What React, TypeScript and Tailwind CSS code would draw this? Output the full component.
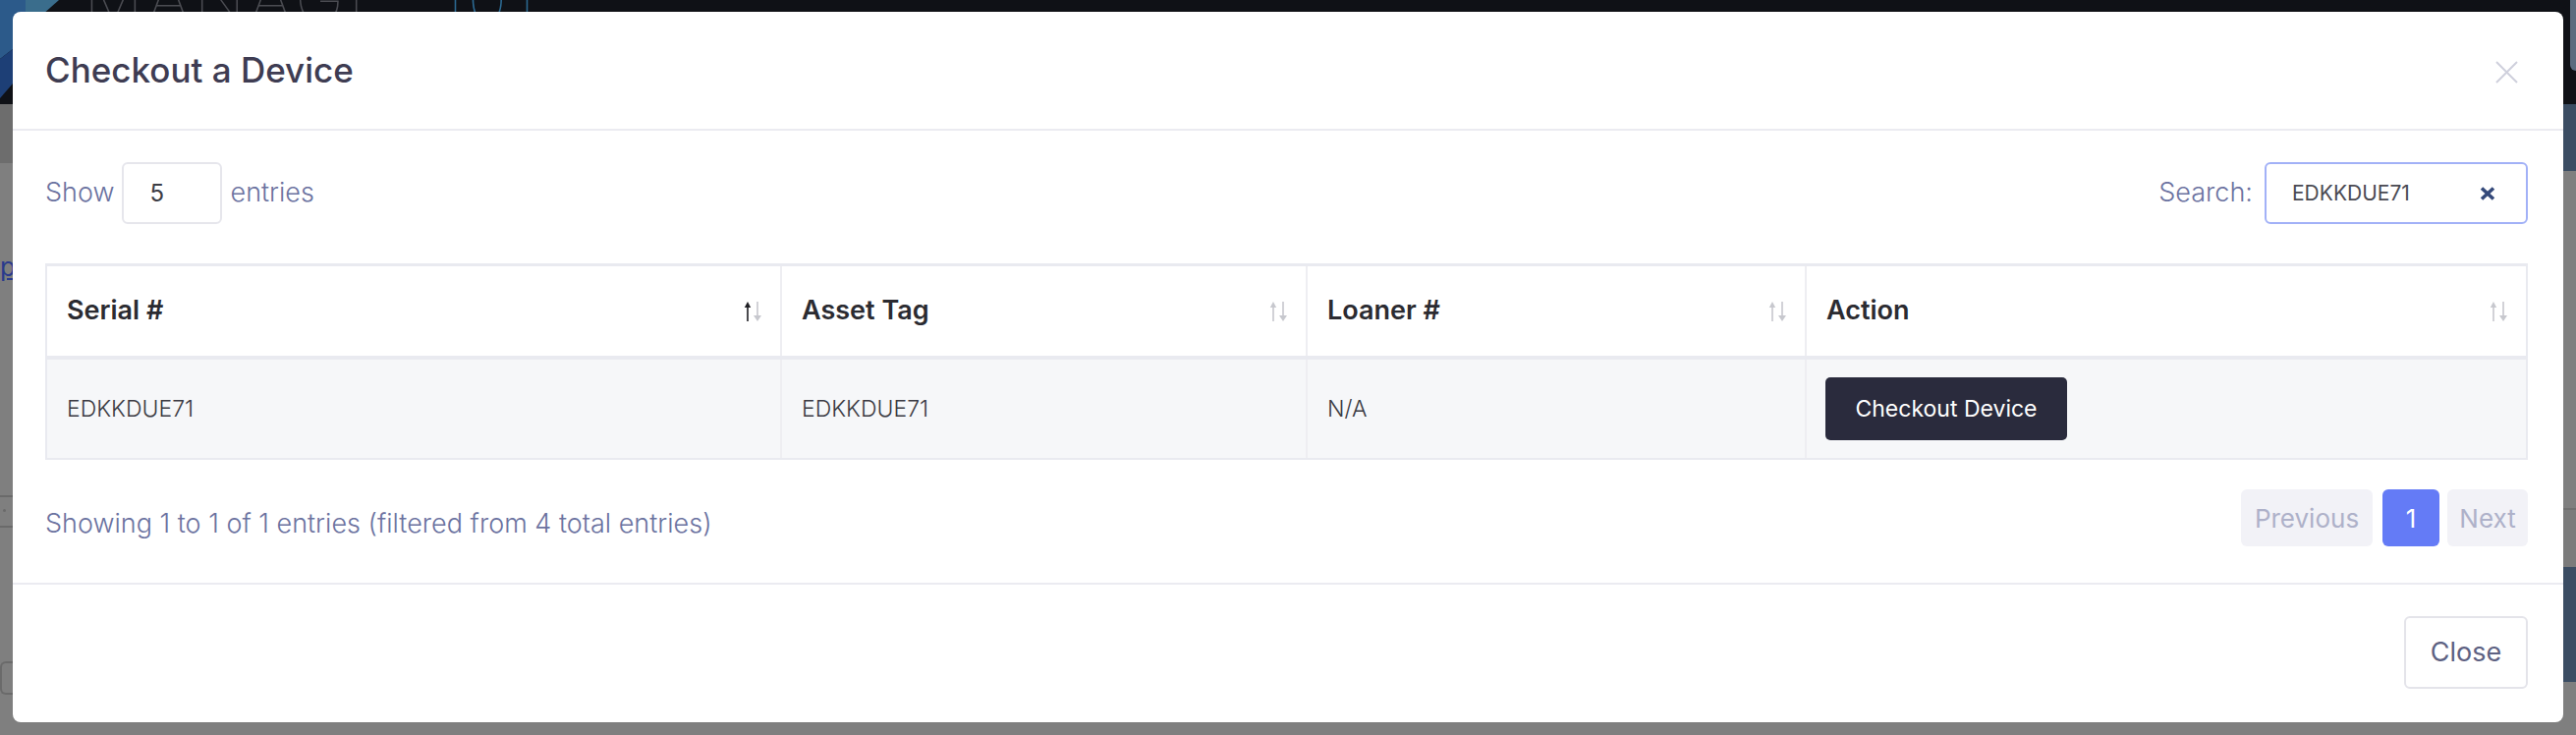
import React from "react";

function SortIcon({ active }: { active?: boolean }) {
  return (
    <svg width="24" height="24" viewBox="0 0 24 24" className="shrink-0">
      <g fill={active ? "#1f1f24" : "#c7c8ce"}>
        <rect x="6.2" y="5" width="1.6" height="17" />
        <path d="M3.8 8 L7 2 L10.2 8 Z" />
      </g>
      <g fill="#c7c8ce">
        <rect x="16.2" y="2" width="1.6" height="17" />
        <path d="M13 16 L17 22 L21 16 Z" />
      </g>
    </svg>
  );
}

const columns = [
  { label: "Serial #", active: true },
  { label: "Asset Tag" },
  { label: "Loaner #" },
  { label: "Action" },
];

export default function App() {
  return (
    <div className="relative h-[748px] w-[2622px] overflow-hidden bg-[#7f7f7f] font-[family-name:Inter,sans-serif]">
      {/* page behind the backdrop */}
      <div className="flex h-[106px] items-start overflow-hidden bg-[#0f1116]">
        <svg width="60" height="106" viewBox="0 0 60 106" className="shrink-0">
          <polygon points="0,0 26,0 26,40 0,60" fill="#2c5a8a" />
          <polygon points="26,0 60,0 26,30" fill="#3a6d8c" />
          <polygon points="0,60 26,40 26,70 0,100" fill="#1d3f76" />
        </svg>
        <div className="-mt-[36px] ml-[25px] flex items-baseline text-[68px] font-thin leading-none tracking-[4px]">
          <span className="text-[#4b4c52]">MANAGE</span>
          <span className="ml-[49px] text-[#2c6a93]">101</span>
        </div>
        <div className="ml-auto h-[72px] w-[6px] rounded-bl-[8px] bg-[#5b6b7f]" />
      </div>
      <div className="flex h-[642px]">
        <div className="flex w-[13px] flex-col">
          <div className="h-[60px] bg-[#6d6d6d]" />
          <div className="mt-[93px] h-[29px] overflow-hidden text-[26px] leading-none text-[#2a3a8c] underline">
            pc
          </div>
          <div className="mt-[216px] h-[2px] bg-[#6a6a6a]" />
          <div className="mt-[12px] ml-[3px] h-[3px] w-[3px] rounded-full bg-[#6a6a6a]" />
          <div className="mt-[14px] h-[2px] bg-[#6a6a6a]" />
          <div className="mt-[136px] h-[34px] rounded-l-[6px] border-2 border-r-0 border-[#6a6a6a]" />
        </div>
        <div className="flex-1" />
        <div className="flex w-[13px] flex-col">
          <div className="h-[68px] bg-[#3b4d63]" />
          <div className="h-[343px]" />
          <div className="h-[2px] bg-[#707070]" />
          <div className="h-[58px] bg-[#7b7b7b]" />
          <div className="h-[117px] bg-[#3b4d63]" />
        </div>
      </div>

      {/* modal */}
      <div className="absolute left-[13px] top-[12px] flex h-[723px] w-[2596px] flex-col rounded-[8px] bg-white">
        <div className="flex h-[121px] items-center justify-between border-b-2 border-[#ebebf1] pl-[33px] pr-[46px]">
          <h2 className="text-[35px] font-medium leading-none text-[#3e3c52]">Checkout a Device</h2>
          <svg width="23" height="23" viewBox="0 0 23 23" className="mt-[3px]">
            <path d="M1 1 L22 22 M22 1 L1 22" stroke="#cfd0dc" strokeWidth="2" />
          </svg>
        </div>

        <div className="flex h-[460px] flex-col pl-[33px] pr-[36px] pt-[32px]">
          <div className="flex h-[63px] items-center justify-between">
            <div className="flex items-center gap-[8px] text-[27px] font-light text-[#6b72a0]">
              <span>Show</span>
              <div className="flex h-[63px] w-[102px] items-center rounded-[6px] border-2 border-[#e6e6ec] pl-[26px] text-[24px] font-normal text-[#3d3d45]">
                5
              </div>
              <span>entries</span>
            </div>
            <div className="flex items-center gap-[12px] text-[27px] font-light text-[#6b72a0]">
              <span>Search:</span>
              <div className="flex h-[63px] w-[268px] items-center justify-between rounded-[6px] border-2 border-[#a2b1f7] pl-[26px] pr-[31px] text-[21px] font-normal text-[#4a4a52]">
                <span>EDKKDUE71</span>
                <svg width="16" height="14" viewBox="0 0 16 14">
                  <path d="M2 1.5 L14 12.5 M14 1.5 L2 12.5" stroke="#34497a" strokeWidth="3.6" />
                </svg>
              </div>
            </div>
          </div>

          <div className="mt-[40px] border-x-2 border-b-2 border-t-[3px] border-[#e9eaf0]">
            <div className="grid h-[95px] grid-cols-[746px_535px_508px_1fr] border-b-4 border-[#e9eaf0]">
              {columns.map((c, i) => (
                <div
                  key={c.label}
                  className={`flex items-center justify-between pl-[20px] pr-[16px] text-[27px] font-semibold text-[#2b2b31] ${i > 0 ? "border-l-2 border-[#eeeef2]" : ""}`}
                >
                  <span>{c.label}</span>
                  <SortIcon active={c.active} />
                </div>
              ))}
            </div>
            <div className="grid h-[100px] grid-cols-[746px_535px_508px_1fr] bg-[#f6f7f9] text-[23px] font-light text-[#3a3a42]">
              <div className="flex items-center pl-[20px]">EDKKDUE71</div>
              <div className="flex items-center border-l-2 border-[#eeeef2] pl-[20px]">EDKKDUE71</div>
              <div className="flex items-center border-l-2 border-[#eeeef2] pl-[20px]">N/A</div>
              <div className="flex items-center border-l-2 border-[#eeeef2] pl-[19px]">
                <button className="flex h-[64px] w-[246px] items-center justify-center rounded-[5px] bg-[#2a2b3d] text-[23px] font-normal text-white">
                  Checkout Device
                </button>
              </div>
            </div>
          </div>

          <div className="mt-[30px] flex h-[58px] items-center justify-between">
            <span className="mt-[12px] text-[27px] font-light text-[#6b72a0]">
              Showing 1 to 1 of 1 entries (filtered from 4 total entries)
            </span>
            <div className="flex items-center text-[26px]">
              <div className="flex h-[58px] w-[134px] items-center justify-center rounded-[6px] bg-[#f2f2f7] text-[#aeb1c9]">
                Previous
              </div>
              <div className="ml-[10px] flex h-[58px] w-[58px] items-center justify-center rounded-[6px] bg-[#647bf6] text-white">
                1
              </div>
              <div className="ml-[8px] flex h-[58px] w-[82px] items-center justify-center rounded-[6px] bg-[#f2f2f7] text-[#aeb1c9]">
                Next
              </div>
            </div>
          </div>
        </div>

        <div className="flex justify-end border-t-2 border-[#ebebf1] pb-[34px] pr-[36px] pt-[32px]">
          <button className="flex h-[74px] w-[126px] items-center justify-center rounded-[6px] border-2 border-[#e4e4ea] text-[27px] text-[#5d6182]">
            Close
          </button>
        </div>
      </div>
    </div>
  );
}
